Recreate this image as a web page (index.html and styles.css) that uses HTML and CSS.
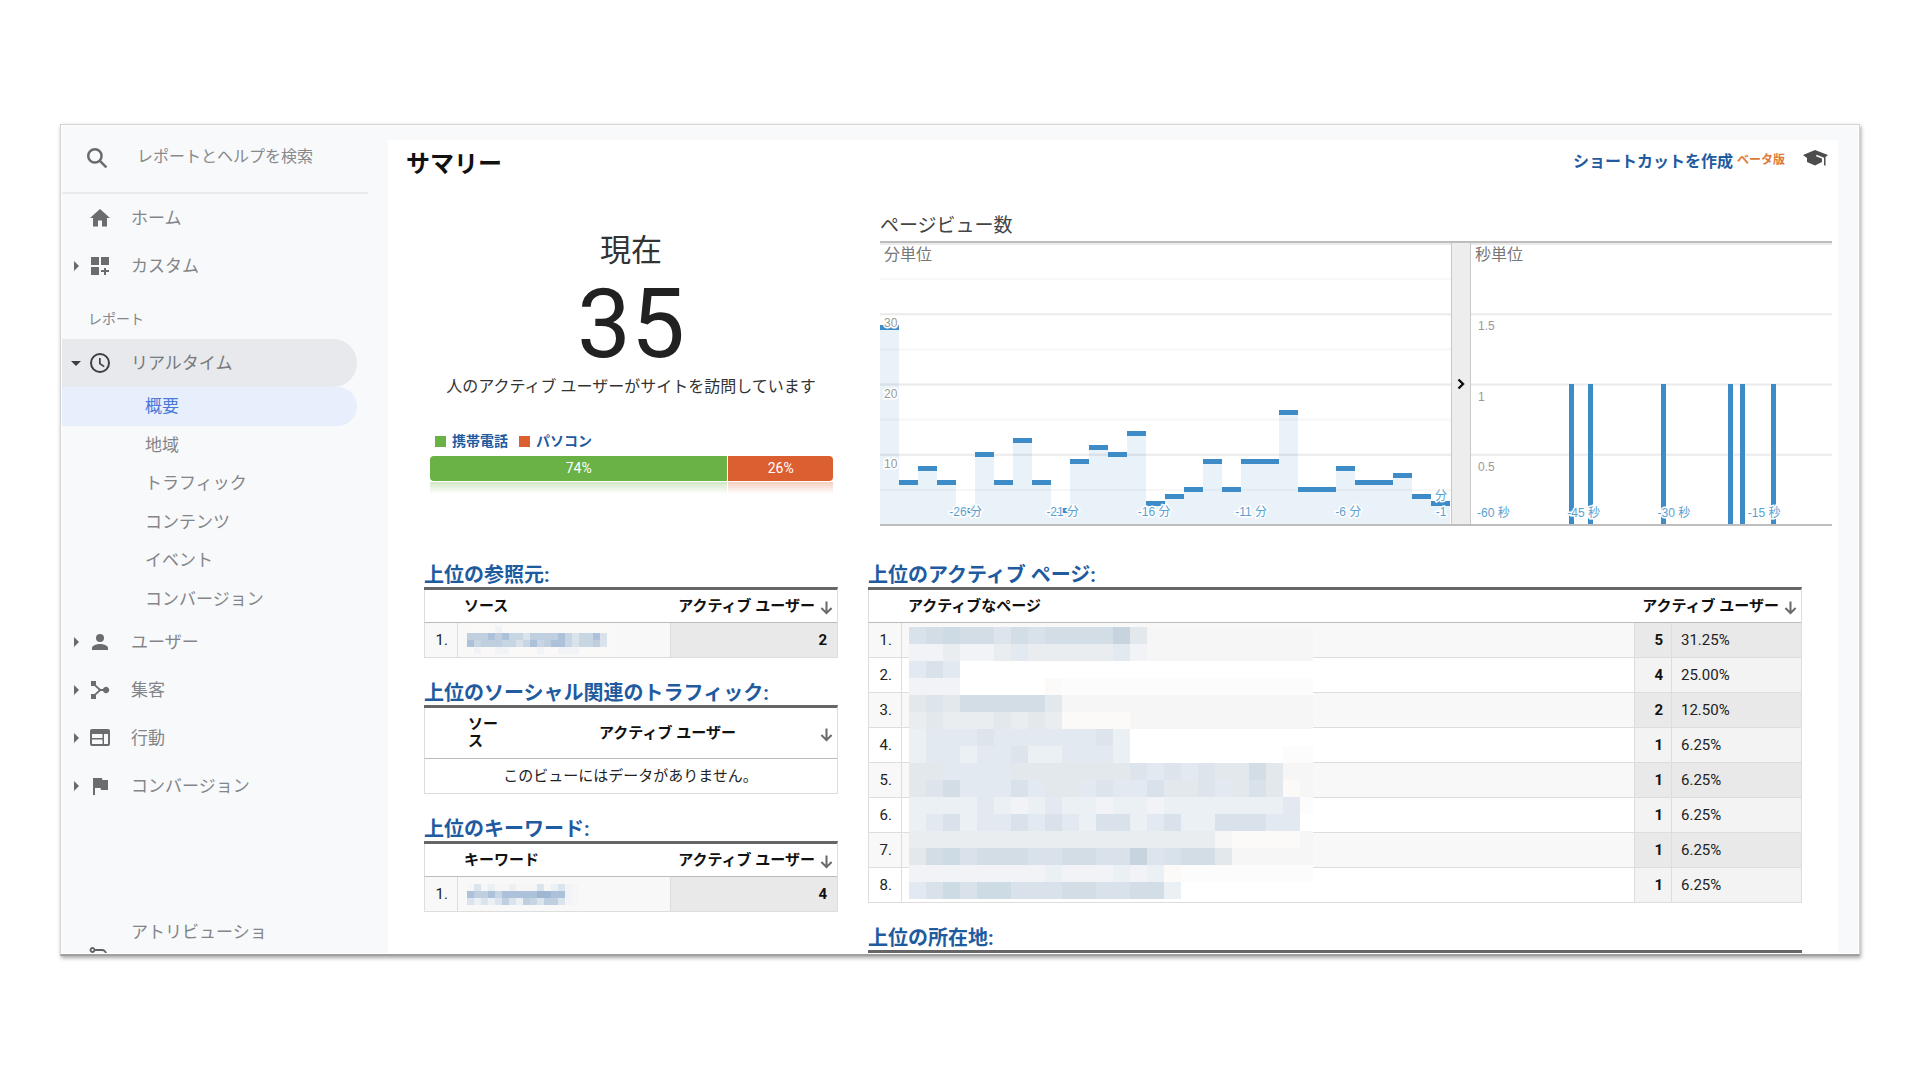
FILE: index.html
```html
<!DOCTYPE html>
<html lang="ja">
<head>
<meta charset="utf-8">
<meta name="viewport" content="width=device-width, initial-scale=1">
<title>リアルタイム サマリー</title>
<link rel="stylesheet" href="styles.css">
</head>
<body>
<div class="window">
  <aside class="sidebar">
    <label class="search">
      <svg class="search-icon" viewBox="0 0 24 24"><circle cx="9.5" cy="9.5" r="6.4"/><path d="M14.3 14.3l6.2 6.2"/></svg>
      <input type="search" placeholder="レポートとヘルプを検索" aria-label="レポートとヘルプを検索">
    </label>
    <nav>
      <a class="item" href="#"><span class="caret"></span>
        <svg viewBox="0 0 24 24"><path d="M10 20.5v-6h4v6h5V12h3L12 3 2 12h3v8.500z"/></svg>ホーム</a>
      <a class="item" href="#"><span class="caret right"></span>
        <svg viewBox="0 0 24 24"><path d="M3 3h8v8H3zM13 3h8v8h-8zM3 13h8v8H3zM16 14h2v2h3v2h-3v3h-2v-3h-3v-2h3z"/></svg>カスタム</a>
      <p class="group">レポート</p>
      <a class="item open" href="#"><span class="caret down"></span>
        <svg viewBox="0 0 24 24"><path fill-rule="evenodd" d="M12 2a10 10 0 1 0 0 20 10 10 0 0 0 0-20zm0 2a8 8 0 1 1 0 16 8 8 0 0 1 0-16z"/><path d="M11 7h1.700v5.200l4 2.900-.9 1.200-4.800-3.400z"/></svg>リアルタイム</a>
      <div class="sub">
        <a class="current" href="#">概要</a>
        <a href="#">地域</a>
        <a href="#">トラフィック</a>
        <a href="#">コンテンツ</a>
        <a href="#">イベント</a>
        <a href="#">コンバージョン</a>
      </div>
      <a class="item" href="#"><span class="caret right"></span>
        <svg viewBox="0 0 24 24"><circle cx="12" cy="8" r="4"/><path d="M12 14c-2.700 0-8 1.300-8 4v2h16v-2c0-2.700-5.300-4-8-4z"/></svg>ユーザー</a>
      <a class="item" href="#"><span class="caret right"></span>
        <svg viewBox="0 0 24 24"><path d="M3 3h5v4l4.500 4H15a3.200 3.200 0 1 1 0 2h-2.500L8 17v4H3v-5h3.500l4.300-4L6.500 8H3z"/></svg>集客</a>
      <a class="item" href="#"><span class="caret right"></span>
        <svg viewBox="0 0 24 24"><path fill-rule="evenodd" d="M4 3h16a2 2 0 0 1 2 2v13a2 2 0 0 1-2 2H4a2 2 0 0 1-2-2V5a2 2 0 0 1 2-2zm0 5v4h10.500V8zm0 5.500V18h10.500v-4.500zM16 8v10h4V8z"/></svg>行動</a>
      <a class="item" href="#"><span class="caret right"></span>
        <svg viewBox="0 0 24 24"><path d="M14.400 6L14 4H5v17h2v-7h5.600l.4 2h7V6z"/></svg>コンバージョン</a>
      <a class="item attribution" href="#"><span class="caret"></span>
        <svg viewBox="0 0 24 24" class="line"><circle cx="4.500" cy="5" r="2"/><path d="M7 5h7a4 4 0 0 1 0 8H8"/></svg><span>アトリビューション</span></a>
    </nav>
  </aside>

  <main class="panel">
    <header class="head">
      <h1>サマリー</h1>
      <div class="tools">
        <a href="#">ショートカットを作成</a>
        <span class="beta">ベータ版</span>
        <svg viewBox="0 0 26 18"><path d="M13 1L1 6l4 3v4l8 3.500L20 13V9.500L14 7.300l.6-1.500L22 8.700V16l1.500 1V8L26 6z"/></svg>
      </div>
    </header>

    <div class="top">
      <section class="now">
        <h2>現在</h2>
        <p class="count">35</p>
        <p class="note">人のアクティブ ユーザーがサイトを訪問しています</p>
        <div class="legend">
          <a class="mobile" href="#">携帯電話</a>
          <a class="desktop" href="#">パソコン</a>
        </div>
        <div class="share"><span style="flex-grow:74">74%</span><span class="desktop" style="flex-grow:26">26%</span></div>
        <div class="reflection"><span style="flex-grow:74"></span><span class="desktop" style="flex-grow:26"></span></div>
      </section>

      <section class="views">
        <h2>ページビュー数</h2>
        <div class="charts">
          <div class="plot minutes">
            <h3>分単位</h3>
            <div class="steps" id="steps"></div>
            <span class="y" style="top:25%">30</span><span class="y" style="top:50%">20</span><span class="y" style="top:75%">10</span>
            <span class="x mid" style="left:15%">-26 分</span><span class="x mid" style="left:32%">-21 分</span><span class="x mid" style="left:48%">-16 分</span><span class="x mid" style="left:65%">-11 分</span><span class="x mid" style="left:82%">-6 分</span>
            <span class="x last">分<br>-1</span>
          </div>
          <button class="toggle" type="button" aria-label="切り替え"><svg viewBox="0 0 8 12"><path d="M1.500 1.500L6 6l-4.500 4.500"/></svg></button>
          <div class="plot seconds">
            <h3>秒単位</h3>
            <div class="hits" id="hits"></div>
            <span class="y" style="top:25%">1.5</span><span class="y" style="top:50%">1</span><span class="y" style="top:75%">0.5</span>
            <span class="x" style="left:0%">-60 秒</span><span class="x" style="left:25%">-45 秒</span><span class="x" style="left:50%">-30 秒</span><span class="x" style="left:75%">-15 秒</span>
          </div>
        </div>
      </section>
    </div>

    <div class="reports">
      <div class="column">
        <section>
          <h2><a href="#">上位の参照元:</a></h2>
          <table>
            <colgroup><col class="c-index"><col class="c-name"><col></colgroup>
            <thead><tr><th></th><th>ソース</th><th class="metric">アクティブ ユーザー<svg class="sort" viewBox="0 0 14 14"><path d="M7 0v12M1.500 7L7 12.500 12.500 7"/></svg></th></tr></thead>
            <tbody><tr><td class="index">1.</td><td><span class="mask" data-mask="source"></span></td><td class="value">2</td></tr></tbody>
          </table>
        </section>
        <section>
          <h2><a href="#">上位のソーシャル関連のトラフィック:</a></h2>
          <table class="empty">
            <colgroup><col class="c-social"><col><col class="c-sort"></colgroup>
            <thead><tr><th>ソース</th><th class="wide">アクティブ ユーザー</th><th class="metric"><svg class="sort" viewBox="0 0 14 14"><path d="M7 0v12M1.500 7L7 12.500 12.500 7"/></svg></th></tr></thead>
            <tbody><tr><td colspan="3">このビューにはデータがありません。</td></tr></tbody>
          </table>
        </section>
        <section>
          <h2><a href="#">上位のキーワード:</a></h2>
          <table>
            <colgroup><col class="c-index"><col class="c-name"><col></colgroup>
            <thead><tr><th></th><th>キーワード</th><th class="metric">アクティブ ユーザー<svg class="sort" viewBox="0 0 14 14"><path d="M7 0v12M1.500 7L7 12.500 12.500 7"/></svg></th></tr></thead>
            <tbody><tr><td class="index">1.</td><td><span class="mask" data-mask="keyword"></span></td><td class="value">4</td></tr></tbody>
          </table>
        </section>
      </div>

      <div class="column">
        <section class="pages">
          <h2><a href="#">上位のアクティブ ページ:</a></h2>
          <table>
            <colgroup><col class="c-index"><col><col class="c-count"><col class="c-percent"></colgroup>
            <thead><tr><th></th><th>アクティブなページ</th><th class="metric" colspan="2">アクティブ ユーザー<svg class="sort" viewBox="0 0 14 14"><path d="M7 0v12M1.500 7L7 12.500 12.500 7"/></svg></th></tr></thead>
            <tbody>
              <tr><td class="index">1.</td><td></td><td class="value">5</td><td class="percent">31.25%</td></tr>
              <tr><td class="index">2.</td><td></td><td class="value">4</td><td class="percent">25.00%</td></tr>
              <tr><td class="index">3.</td><td></td><td class="value">2</td><td class="percent">12.50%</td></tr>
              <tr><td class="index">4.</td><td></td><td class="value">1</td><td class="percent">6.25%</td></tr>
              <tr><td class="index">5.</td><td></td><td class="value">1</td><td class="percent">6.25%</td></tr>
              <tr><td class="index">6.</td><td></td><td class="value">1</td><td class="percent">6.25%</td></tr>
              <tr><td class="index">7.</td><td></td><td class="value">1</td><td class="percent">6.25%</td></tr>
              <tr><td class="index">8.</td><td></td><td class="value">1</td><td class="percent">6.25%</td></tr>
            </tbody>
          </table>
          <div class="mask over" data-mask="pages"></div>
        </section>
        <section>
          <h2><a href="#">上位の所在地:</a></h2>
          <div class="rule"></div>
        </section>
      </div>
    </div>
  </main>
</div>
<script src="script.js"></script>
</body>
</html>
```
FILE: styles.css
```css
* { box-sizing: border-box; }

body {
  margin: 0;
  height: 100vh;
  padding: 124px 60px;
  background: #fff;
  color: #222;
  font-family: Roboto, "Noto Sans CJK JP", sans-serif;
  font-size: 15px;
}

h1, h2, h3, p { margin: 0; font-weight: 400; }
a { color: #1f5b9f; text-decoration: none; }

.window {
  display: flex;
  height: 100%;
  padding: 1px;
  overflow: hidden;
  background: #f8f9fb;
  border: 1px solid #d4d4d4;
  border-bottom: 2px solid #a0a0a0;
  box-shadow: inset 0 0 0 1px #fff, 1px 2px 4px rgba(0, 0, 0, .35);
}

/* Sidebar */
.sidebar { flex: none; width: 326px; overflow: hidden; }

.search {
  display: flex;
  align-items: center;
  gap: 27px;
  height: 68px;
  margin-right: 20px;
  padding: 0 0 2px 23px;
  border-bottom: 2px solid #e9eaec;
}
.search-icon { width: 25px; height: 25px; fill: none; stroke: #6b6b6b; stroke-width: 2.400; }
.search input {
  width: 200px;
  padding: 0 0 2px;
  border: 0;
  outline: 0;
  background: none;
  font: 16px/24px Roboto, "Noto Sans CJK JP", sans-serif;
}
.search input::placeholder { color: #88898c; opacity: 1; }

.item {
  display: flex;
  align-items: center;
  height: 48px;
  margin-right: 31px;
  color: #838588;
  font-size: 17px;
  line-height: 24px;
}
.item svg { flex: none; width: 24px; height: 24px; margin-right: 19px; fill: #6b6c6f; }
.caret { width: 26px; padding-left: 12px; }
.caret::before { content: ""; display: block; width: 0; }
.caret.right::before { border: solid transparent; border-width: 5px 0 5px 5px; border-left-color: #6b6b6b; }
.caret.down { padding-left: 9px; }
.caret.down::before { border: solid transparent; border-width: 5px 5px 0; border-top-color: #3c4043; }
.item.open { background: #e8e9ec; border-radius: 0 24px 24px 0; color: #77797c; }
.item.open svg { fill: #3c4043; }

.group { height: 49px; padding: 10px 0 0 26px; color: #838588; font-size: 14px; line-height: 38px; }

.sub { display: grid; grid-auto-rows: 1fr; height: 231px; margin-right: 31px; }
.sub a {
  display: flex;
  align-items: center;
  padding: 0 0 3px 83px;
  color: #838588;
  font-size: 17px;
}
.sub .current { background: #e7effd; border-radius: 0 20px 20px 0; color: #4a7ad8; }

.attribution { align-items: flex-end; margin-top: 116px; line-height: 28px; }
.attribution span:last-child { width: 150px; }
.item .line { margin-bottom: 5px; fill: none; stroke: #5f6164; stroke-width: 1.800; }

/* Main panel */
.panel { flex: 1; min-width: 0; margin: 14px 20px 0 0; background: #fff; overflow: hidden; }

.head { display: flex; align-items: center; justify-content: space-between; height: 48px; padding: 0 10px 0 18px; }
h1 { color: #111; font-size: 24px; font-weight: 700; line-height: 36px; }
.tools { display: flex; align-items: center; gap: 4px; height: 40px; margin-bottom: 8px; }
.tools a { font-size: 16px; font-weight: 700; }
.beta { padding-bottom: 3px; color: #dc7a3c; font-size: 12px; font-weight: 700; }
.tools svg { width: 26px; height: 18px; margin: 0 0 4px 13px; fill: #4d4d4d; }

.top {
  display: grid;
  grid-template-columns: 414fr 952fr;
  gap: 42px;
  padding: 0 6px 0 36px;
}

.now { padding-top: 43px; text-align: center; }
.now h2 { color: #333; font-size: 31px; line-height: 40px; }
.count { margin-top: 5px; color: #212121; font-size: 96px; line-height: 96px; }
.note { margin-top: 3px; color: #333; font-size: 16px; line-height: 24px; white-space: nowrap; }
.legend { display: flex; gap: 11px; margin: 32px 0 5px 11px; font-size: 14px; font-weight: 700; line-height: 20px; }
.legend a { display: flex; align-items: center; gap: 6px; }
.legend a::before { content: ""; width: 11px; height: 11px; background: #6ab146; }
.legend .desktop::before { background: #dc5f32; }
.share, .reflection { display: flex; gap: 1px; margin: 0 5px 0 6px; }
.share { height: 25px; border-radius: 4px; overflow: hidden; color: #fff; font-size: 14px; line-height: 25px; }
.share span, .reflection span { flex-basis: 0; background: #6ab146; }
.share .desktop, .reflection .desktop { background: #dc5f32; }
.reflection {
  height: 12px;
  margin-top: 1px;
  opacity: .3;
  -webkit-mask-image: linear-gradient(#000, transparent);
  mask-image: linear-gradient(#000, transparent);
}

.views { padding-top: 26px; }
.views h2 { padding-bottom: 3px; color: #444; font-size: 19px; line-height: 24px; }
.charts {
  display: grid;
  grid-template-columns: 571fr 20px 361fr;
  height: 285px;
  border: solid #bdbdbd;
  border-width: 2px 0;
}
.plot { position: relative; min-width: 0; }
.plot h3 { position: absolute; top: 0; left: 4px; color: #777; font-size: 16px; line-height: 24px; }
.minutes {
  background:
    linear-gradient(#ebebeb 2px, transparent 2px) 0 0 / 100% 25%,
    linear-gradient(#f7f7f7 2px, transparent 2px) 0 0 / 100% 12.5%;
}
.seconds { background: linear-gradient(#ebebeb 2px, transparent 2px) 0 0 / 100% 25%; }
.steps { display: flex; align-items: flex-end; height: 100%; padding-right: 1px; }
.steps i { flex: 1; background: rgba(62, 140, 199, .11); border-top: 5px solid #3e8cc7; }
.hits i { position: absolute; bottom: 0; width: 5px; height: 50%; background: #3e8cc7; }
.x, .y {
  position: absolute;
  font: 12px/16px "Liberation Sans", "Noto Sans CJK JP", sans-serif;
  white-space: nowrap;
  -webkit-text-stroke: 3px #fff;
  paint-order: stroke fill;
}
.y { left: 4px; margin-top: 2px; color: #999; }
.seconds .y { left: 7px; margin-top: 5px; }
.x { bottom: 4px; color: #5a9fd2; }
.seconds .x { bottom: 3px; margin-left: 6px; }
.x.mid { transform: translateX(-50%); }
.x.last { right: 4px; text-align: center; }
.toggle {
  display: flex;
  align-items: center;
  justify-content: center;
  padding: 0;
  border: solid #c8c8c8;
  border-width: 0 1px;
  background: #ededed;
}
.toggle svg { width: 8px; height: 12px; fill: none; stroke: #111; stroke-width: 2.400; }

/* Report tables */
.reports {
  display: grid;
  grid-template-columns: 414fr 934fr;
  gap: 30px;
  padding: 35px 36px 0;
}
.column { display: flex; flex-direction: column; gap: 21px; min-width: 0; }
.column h2 { padding-top: 2px; font-size: 20px; font-weight: 700; line-height: 24px; white-space: nowrap; }
table { width: 100%; border-spacing: 0; table-layout: fixed; border-top: 3px solid #666; border-right: 1px solid #ddd; }
.c-index { width: 33px; }
.c-name { width: 213px; }
.c-count { width: 37px; }
.c-percent { width: 130px; }
.c-social { width: 80px; }
.c-sort { width: 30px; }
th {
  height: 33px;
  padding: 0 0 0 7px;
  border-bottom: 1px solid #bbb;
  color: #111;
  font-weight: 700;
  line-height: 17px;
  text-align: left;
  white-space: nowrap;
}
th:first-child, td:first-child { border-left: 1px solid #ddd; }
th.metric { padding-right: 4px; text-align: right; }
.sort { width: 13px; height: 14px; margin-left: 5px; vertical-align: -4px; fill: none; stroke: #6a6a6a; stroke-width: 2.200; }
td { height: 35px; padding: 0 10px 0 9px; border-bottom: 1px solid #ddd; line-height: 20px; }
td + td { border-left: 1px solid #ddd; }
tr:nth-child(odd) td { background: #f8f8f8; }
td.index { padding: 0 9px; text-align: right; }
tr td.value { color: #111; font-weight: 700; text-align: right; }
.value, .percent { background: #f3f3f3; }
tbody tr:nth-child(odd) .value, tbody tr:nth-child(odd) .percent { background: #e9e9e9; }
.pages .value { padding: 0 8px 0 0; }
.empty th { height: 51px; white-space: normal; }
.empty th:first-child { padding-left: 43px; }
.empty th.wide { padding-left: 24px; text-align: center; }
.empty tr:nth-child(odd) td { background: #fff; text-align: center; }
.rule { height: 3px; background: #666; }

.mask { display: block; }
.mask svg { display: block; }
.pages { position: relative; }
.over { position: absolute; top: 66px; left: 41px; width: 404px; overflow: hidden; }
```
FILE: script.js
```js
const SVG = "http://www.w3.org/2000/svg";

const palette = {
  a: "#d9e2ea", b: "#d3dde6", c: "#cddbe5", d: "#e2e8eb", e: "#e2e9f1",
  f: "#f6f6f6", g: "#e9edef", h: "#f2f3f6", i: "#dde4ec", j: "#eaf0f4",
  k: "#c7d4df", n: "#fcfcfd", o: "#fcfaf8", w: "#ffffff",
  p: "#c8d6e4", q: "#bfcfe0", r: "#acc2da", s: "#dbe4ec", t: "#9fb7d2", u: "#fbf9f7"
};

const masks = {
  pages: { w: 17, h: 17, rows: [
    "abcbbibabbbbkdffffffffff",
    "hhghhgegggggehffffffffff",
    "eaewwwwwwwwwwwwwwwwwwwww",
    "hhhwwwwwonnnnnnnnnnnnnnn",
    "didbbbbbdfffffffffffffff",
    "gdgggdgdgoooofffffffffff",
    "jeeeieeeeeeijwwwwwwwwwww",
    "jeejeeijjeeejwwwwwwwwwnn",
    "ddeeeedddddddieieiddbdff",
    "dibeeeaeddeieeaddiedadof",
    "jjjjejhjejjhjjhjjjjjjjen",
    "jeajeeaeaejaajeajjaaaeew",
    "ggggggggggggggggggfoooof",
    "dbcabbbaabbaakiabbdfffff",
    "hhhhhhhhjhhhjhjonnnnnnnn",
    "eacaccaaabbaabbjwwwwwwww"
  ] },
  source: { w: 7, h: 7, rows: [
    "uuuuhuuuuuuuuuuuuuuuu",
    "qqqrqrppsqqqqrpspprau",
    "rpqqqppaprpqrrpappqsu",
    "uhuuhhuuuuhuuhhhuuuuu"
  ] },
  keyword: { w: 7, h: 7, rows: [
    "fsfjffjfffsfjshf",
    "rqqrprrrrrttrrhf",
    "sjsjsqsjqpsqqshf"
  ] }
};

document.querySelectorAll("[data-mask]").forEach(host => {
  const { w, h, rows } = masks[host.dataset.mask];
  const svg = document.createElementNS(SVG, "svg");
  svg.setAttribute("width", rows[0].length * w);
  svg.setAttribute("height", rows.length * h);
  svg.setAttribute("shape-rendering", "crispEdges");
  rows.forEach((row, y) => [...row].forEach((key, x) => {
    const cell = document.createElementNS(SVG, "rect");
    cell.setAttribute("x", x * w);
    cell.setAttribute("y", y * h);
    cell.setAttribute("width", w);
    cell.setAttribute("height", h);
    cell.setAttribute("fill", palette[key]);
    svg.append(cell);
  }));
  host.append(svg);
});

// Page views per minute, oldest first; the axis runs from 0 to 40.
const minutes = [28, 6, 8, 6, 2, 10, 6, 12, 6, 2, 9, 11, 10, 13, 3, 4, 5, 9, 5, 9, 9, 16, 5, 5, 8, 6, 6, 7, 4, 3];
minutes.forEach(v => {
  const bar = document.createElement("i");
  bar.style.height = `calc(${v / 40 * 100}% + 2px)`;
  document.getElementById("steps").append(bar);
});

// Seconds with one page view, as a share of the last minute.
[27.2, 32.3, 52.6, 71.3, 74.6, 83.2].forEach(p => {
  const bar = document.createElement("i");
  bar.style.left = p + "%";
  document.getElementById("hits").append(bar);
});
```
